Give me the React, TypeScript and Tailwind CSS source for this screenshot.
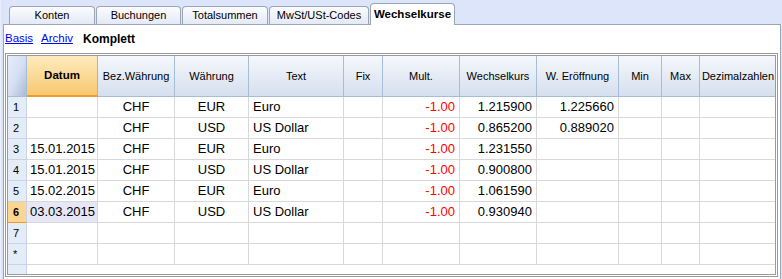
import React from 'react';

const tabs = ['Konten', 'Buchungen', 'Totalsummen', 'MwSt/USt-Codes'];
const tabWidths = ['w-[86px]', 'w-[85px]', 'w-[86px]', 'w-[100px]'];

const cols = [
  { title: 'Datum', w: 'w-[71px]', align: 'text-left pl-[3px]' },
  { title: 'Bez.Währung', w: 'w-[77px]', align: 'text-center' },
  { title: 'Währung', w: 'w-[74px]', align: 'text-center' },
  { title: 'Text', w: 'w-[95px]', align: 'text-left pl-[4px]' },
  { title: 'Fix', w: 'w-[39px]', align: 'text-center' },
  { title: 'Mult.', w: 'w-[77px]', align: 'text-right pr-[4px]' },
  { title: 'Wechselkurs', w: 'w-[77px]', align: 'text-right pr-[4px]' },
  { title: 'W. Eröffnung', w: 'w-[82px]', align: 'text-right pr-[4px]' },
  { title: 'Min', w: 'w-[43px]', align: 'text-right pr-[4px]' },
  { title: 'Max', w: 'w-[38px]', align: 'text-right pr-[4px]' },
  { title: 'Dezimalzahlen', w: 'w-[77px]', align: 'text-right pr-[4px]' },
];

const rows: string[][] = [
  ['', 'CHF', 'EUR', 'Euro', '', '-1.00', '1.215900', '1.225660', '', '', ''],
  ['', 'CHF', 'USD', 'US Dollar', '', '-1.00', '0.865200', '0.889020', '', '', ''],
  ['15.01.2015', 'CHF', 'EUR', 'Euro', '', '-1.00', '1.231550', '', '', '', ''],
  ['15.01.2015', 'CHF', 'USD', 'US Dollar', '', '-1.00', '0.900800', '', '', '', ''],
  ['15.02.2015', 'CHF', 'EUR', 'Euro', '', '-1.00', '1.061590', '', '', '', ''],
  ['03.03.2015', 'CHF', 'USD', 'US Dollar', '', '-1.00', '0.930940', '', '', '', ''],
  ['', '', '', '', '', '', '', '', '', '', ''],
  ['', '', '', '', '', '', '', '', '', '', ''],
];
const rowLabels = ['1', '2', '3', '4', '5', '6', '7', '*'];

export default function App() {
  return (
    <div className="w-[782px] h-[279px] overflow-hidden flex bg-[#dde5fa] font-['Liberation_Sans',Arial,sans-serif] text-black">
      {/* window frame stripe */}
      <div className="w-[3px] bg-gradient-to-r from-[#eef2fd] to-[#d4ddf5]" />
      <div className="flex-1 flex flex-col min-w-0">
        {/* Tabs */}
        <div className="h-[24px] flex items-end pl-[6px] gap-px shrink-0">
          {tabs.map((t, i) => (
            <div
              key={t}
              className={`${tabWidths[i]} h-[18px] rounded-t-[4px] border border-b-0 border-[#9aa6b8] bg-gradient-to-b from-[#fbfcfe] to-[#e3e9f6] text-[11px] leading-[17px] text-center`}
            >
              {t}
            </div>
          ))}
          <div className="w-[85px] h-[22px] -mb-px z-10 rounded-t-[4px] border border-b-0 border-[#9aa6b8] bg-white text-[11.5px] font-bold leading-[20px] text-center">
            Wechselkurse
          </div>
        </div>

        {/* Panel */}
        <div className="flex-1 flex flex-col bg-white border border-[#9aa6b8] border-b-0 mr-px min-h-0">
          {/* view links */}
          <div className="h-[28px] flex items-center pl-[1px] shrink-0 text-[11.5px]">
            <span className="w-[36px] text-[#0000ff] underline">Basis</span>
            <span className="w-[42px] text-[#0000ff] underline">Archiv</span>
            <span className="text-[12px] font-bold">Komplett</span>
          </div>

          {/* Grid */}
          <div className="flex-1 ml-[1px] mr-[2px] mb-[2px] flex flex-col border-[3px] border-double border-[#9a9a9a] min-h-0 overflow-hidden">
            {/* header */}
            <div className="flex h-[41px] shrink-0">
              <div className="w-[19px] shrink-0 border-r border-b border-[#a7bcd6] bg-gradient-to-br from-[#e6edfb] via-[#d6e0f2] to-[#a9bbd6]" />
              {cols.map((c, i) =>
                i === 0 ? (
                  <div
                    key={c.title}
                    className={`${c.w} shrink-0 flex items-center justify-center border-r border-b-2 border-r-[#f0a840] border-b-[#f19a2c] bg-gradient-to-b from-[#fdebbd] to-[#f8c86e] text-[11.5px] font-bold`}
                  >
                    {c.title}
                  </div>
                ) : (
                  <div
                    key={c.title}
                    className={`${c.w} shrink-0 flex items-center justify-center border-r border-b border-[#a7bcd6] bg-gradient-to-b from-[#f5f8fc] to-[#d5dfee] text-[11px] whitespace-nowrap`}
                  >
                    {c.title}
                  </div>
                )
              )}
            </div>

            {/* rows */}
            {rows.map((r, ri) => {
              const current = ri === 5;
              return (
                <div key={ri} className="flex h-[21px] shrink-0">
                  <div
                    className={`w-[19px] shrink-0 pl-[5px] text-[11px] leading-[20px] border-r border-b ${
                      current
                        ? 'bg-[#fcd592] border-r-[#c8d4e6] border-b-[#f19a2c] font-bold'
                        : 'bg-[#e4ecf7] border-[#c8d4e6]'
                    }`}
                  >
                    {rowLabels[ri]}
                  </div>
                  {r.map((v, ci) => (
                    <div
                      key={ci}
                      className={`${cols[ci].w} ${cols[ci].align} shrink-0 text-[13px] leading-[20px] whitespace-nowrap border-r border-b border-[#d8d8d8] ${
                        current && ci === 0 ? 'bg-[#e6e6f6]' : ''
                      } ${ci === 5 ? 'text-[#ff0000]' : ''}`}
                    >
                      {v}
                    </div>
                  ))}
                </div>
              );
            })}

            {/* empty area below */}
            <div className="flex-1 flex">
              <div className="w-[19px] bg-[#e4ecf7] border-r border-[#c8d4e6]" />
              <div className="flex-1" />
            </div>
          </div>
        </div>
      </div>
    </div>
  );
}
